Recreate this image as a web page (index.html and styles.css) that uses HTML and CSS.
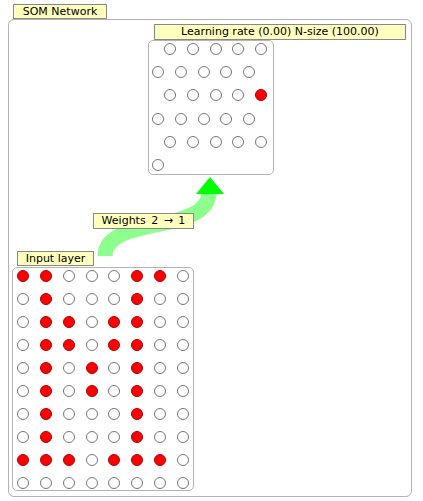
FILE: index.html
```html
<!DOCTYPE html>
<html lang="en">
<head>
  <meta charset="UTF-8" />
  <title>SOM Network</title>
  <link rel="stylesheet" href="styles.css">
</head>
<body>
  <div class="tag title-tag">SOM Network</div>

  <div class="network">
    <svg class="link" width="402" height="476" viewBox="0 0 402 476">
      <path d="M96 236 C96 195 200 215 200 172" fill="none" stroke="#8cff8c" stroke-width="15"/>
      <polygon points="201,157 187,174 215,174" fill="#00ff00"/>
    </svg>
    <div class="tag weights-tag">Weights 2 &rarr; 1</div>

    <div class="node som-node">
      <div class="tag som-tag">Learning rate (0.00) N-size (100.00)</div>
      <div class="grid som-grid" id="somGrid"></div>
    </div>

    <div class="node input-node">
      <div class="tag input-tag">Input layer</div>
      <div class="grid input-grid" id="inputGrid"></div>
    </div>
  </div>

  <script>
    // SOM layer: 26 nodes, rows of 5, every other row shifted right
    let somGrid = document.getElementById('somGrid');
    let somCount = 26;
    for (let r = 0; r * 5 < somCount; r++) {
      let row = document.createElement('div');
      row.className = 'som-row' + (r % 2 === 0 ? ' shifted' : '');
      for (let c = 0; c < 5 && r * 5 + c < somCount; c++) {
        let dot = document.createElement('span');
        dot.className = 'dot' + (r === 2 && c === 4 ? ' on' : '');
        row.appendChild(dot);
      }
      somGrid.appendChild(row);
    }

    // Input layer: 8 x 10 pattern
    let pattern = [
      'XX...XX.',
      '.X...X..',
      '.XX.XX..',
      '.XX.XX..',
      '.X.X.X..',
      '.X.X.X..',
      '.X...X..',
      '.X...X..',
      'XXX.XXX.',
      '........'
    ];
    let inputGrid = document.getElementById('inputGrid');
    pattern.forEach(function (line) {
      for (let i = 0; i < line.length; i++) {
        let dot = document.createElement('span');
        dot.className = 'dot' + (line[i] === 'X' ? ' on' : '');
        inputGrid.appendChild(dot);
      }
    });
  </script>
</body>
</html>
```

FILE: styles.css
```css
* { margin: 0; padding: 0; box-sizing: border-box; }

body {
  background: #fff;
  font-family: 'DejaVu Sans', 'Liberation Sans', sans-serif;
  font-size: 11px;
  color: #000;
}

.tag {
  height: 16px;
  line-height: 14px;
  background: #ffffbe;
  border: 1px solid #888;
  text-align: center;
  white-space: nowrap;
}

.title-tag {
  width: 94px;
  height: 15px;
  line-height: 13px;
  margin: 4px 0 0 13px;
}

.network {
  position: relative;
  width: 404px;
  height: 478px;
  margin-left: 8px;
  border: 1px solid #b4b4b4;
  border-radius: 6px;
}

.link {
  position: absolute;
  left: 0;
  top: 0;
}

.weights-tag {
  position: absolute;
  left: 84px;
  top: 193px;
  width: 101px;
  word-spacing: 2px;
}

.node {
  position: relative;
  display: flex;
  flex-direction: column;
  align-items: flex-start;
}

.som-node {
  margin: 4px 0 0 139px;
}

.som-tag {
  width: 252px;
  margin-left: 6px;
}

.input-node {
  margin: 76px 0 0 3px;
}

.input-tag {
  width: 77px;
  height: 15px;
  line-height: 13px;
  margin: 0 0 1px 5px;
}

.grid {
  background: #fff;
  border: 1px solid #b4b4b4;
  border-radius: 5px;
}

.som-grid {
  width: 126px;
  height: 135px;
  padding: 2px 0 0 3px;
  display: flex;
  flex-direction: column;
  gap: 11.2px;
}

.som-row {
  display: flex;
  gap: 10.8px;
}

.som-row.shifted {
  padding-left: 12px;
}

.input-grid {
  width: 182px;
  height: 224px;
  padding: 2px 4px 1px 4px;
  display: grid;
  grid-template-columns: repeat(8, 12px);
  grid-auto-rows: 12px;
  column-gap: 10.85px;
  row-gap: 11px;
}

.dot {
  display: block;
  width: 12px;
  height: 12px;
  border-radius: 50%;
  border: 1px solid #777;
  background: #fff;
}

.dot.on {
  background: #ff0000;
  border-color: #b00000;
}
```
